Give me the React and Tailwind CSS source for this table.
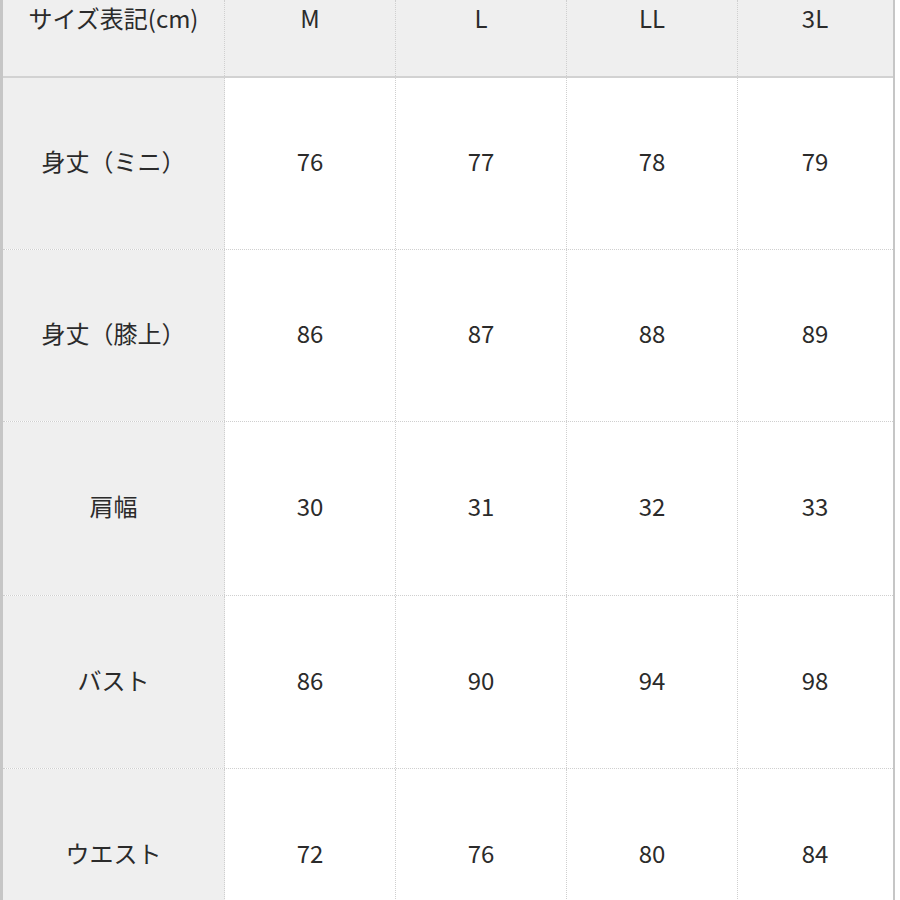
import React from 'react';

const sizes = ['M', 'L', 'LL', '3L'];

const rows = [
  { label: '身丈（ミニ）', values: ['76', '77', '78', '79'], h: 'h-[172px]' },
  { label: '身丈（膝上）', values: ['86', '87', '88', '89'], h: 'h-[172px]' },
  { label: '肩幅', values: ['30', '31', '32', '33'], h: 'h-[174px]' },
  { label: 'バスト', values: ['86', '90', '94', '98'], h: 'h-[173px]' },
  { label: 'ウエスト', values: ['72', '76', '80', '84'], h: 'h-[173px]' },
];

const cols = 'grid grid-cols-[222px_171px_171px_171px_154px]';

const App = () => {
  return (
    <div
      className="flex h-[900px] w-[900px] items-start overflow-hidden bg-white text-[24px] text-[#2b2b2b]"
      style={{ fontFamily: '"Noto Sans CJK JP", "Noto Sans", sans-serif' }}
    >
      <div className="flex w-[895px] shrink-0 flex-col border-l-[3px] border-r-2 border-[#c6c6c6]">
        <div className={`${cols} h-[78px] shrink-0 border-b-2 border-[#d2d2d2] bg-[#efefef]`}>
          <div className="border-r border-dotted border-[#cfcfcf] text-center leading-[36px]">サイズ表記(cm)</div>
          {sizes.map((s, i) => (
            <div
              key={s}
              className={`text-center leading-[36px] ${i < 3 ? 'border-r border-dotted border-[#cfcfcf]' : ''}`}
            >
              {s}
            </div>
          ))}
        </div>

        {rows.map((row) => (
          <div key={row.label} className={`${cols} ${row.h} shrink-0 border-b border-dotted border-[#cfcfcf]`}>
            <div className="flex items-center justify-center border-r border-dotted border-[#cfcfcf] bg-[#efefef] pb-[5px]">
              {row.label}
            </div>
            {row.values.map((v, i) => (
              <div
                key={i}
                className={`flex items-center justify-center bg-white pb-[5px] ${i < 3 ? 'border-r border-dotted border-[#cfcfcf]' : ''}`}
              >
                {v}
              </div>
            ))}
          </div>
        ))}
      </div>
    </div>
  );
};

export default App;
